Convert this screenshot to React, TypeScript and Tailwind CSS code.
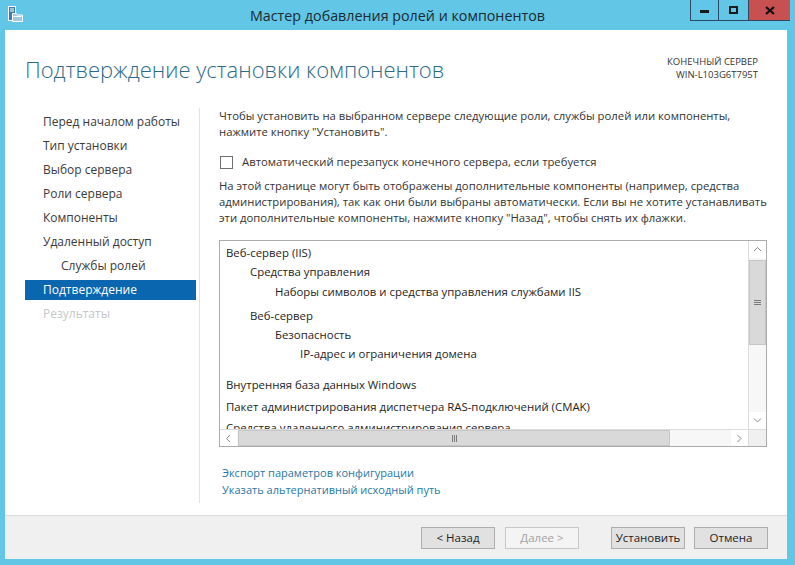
import React from 'react'

const font = { fontFamily: '"Open Sans", "Noto Sans", sans-serif' }

const navItems = [
  { label: 'Перед началом работы', indent: false, state: 'normal' },
  { label: 'Тип установки', indent: false, state: 'normal' },
  { label: 'Выбор сервера', indent: false, state: 'normal' },
  { label: 'Роли сервера', indent: false, state: 'normal' },
  { label: 'Компоненты', indent: false, state: 'normal' },
  { label: 'Удаленный доступ', indent: false, state: 'normal' },
  { label: 'Службы ролей', indent: true, state: 'normal' },
  { label: 'Подтверждение', indent: false, state: 'active' },
  { label: 'Результаты', indent: false, state: 'disabled' },
]

// tree of features to install; mt tweaks spacing between groups
const features = [
  { label: 'Веб-сервер (IIS)', level: 0, mt: 'mt-[2px]' },
  { label: 'Средства управления', level: 1, mt: 'mt-0' },
  { label: 'Наборы символов и средства управления службами IIS', level: 2, mt: 'mt-[1px]' },
  { label: 'Веб-сервер', level: 1, mt: 'mt-[5px]' },
  { label: 'Безопасность', level: 2, mt: 'mt-0' },
  { label: 'IP-адрес и ограничения домена', level: 3, mt: 'mt-0' },
  { label: 'Внутренняя база данных Windows', level: 0, mt: 'mt-[12px]' },
  { label: 'Пакет администрирования диспетчера RAS-подключений (CMAK)', level: 0, mt: 'mt-[3px]' },
  { label: 'Средства удаленного администрирования сервера', level: 0, mt: 'mt-[2px]' },
]

const indents = ['pl-[6px]', 'pl-[30px]', 'pl-[55px]', 'pl-[80px]']

function WindowIcon() {
  return (
    <svg width="17" height="16" viewBox="0 0 17 16" className="ml-[7px] mt-[6px]">
      <rect x="1.5" y="0.5" width="7" height="14" fill="#3a7bbf" stroke="#ffffff" />
      <rect x="3" y="2.5" width="4" height="1" fill="#ffffff" />
      <rect x="3" y="4.5" width="4" height="1" fill="#ffffff" />
      <path d="M5.5 7.5 h4 l1 1.5 h5 v6.5 h-10 z" fill="#9fc9e0" stroke="#ffffff" />
      <path d="M6.5 10.5 h8" stroke="#ffffff" />
    </svg>
  )
}

function TitleBar() {
  return (
    <div className="relative h-[30px] flex items-start shrink-0">
      <WindowIcon />
      <div className="absolute left-0 right-0 top-[5px] text-center text-[14.3px] text-[#1b2a33]" style={font}>
        Мастер добавления ролей и компонентов
      </div>
      <div className="ml-auto mr-[5px] flex h-[21px] border-b border-l border-[#2c4a63]">
        <div className="w-[28px] flex items-center justify-center border-r border-[#2c4a63]">
          <div className="w-[9px] h-[3px] bg-[#1a1a1a] mt-[3px]" />
        </div>
        <div className="w-[29px] flex items-center justify-center">
          <div className="w-[9px] h-[8px] border-2 border-[#1a1a1a]" />
        </div>
        <div className="w-[42px] flex items-center justify-center bg-[#c75050] border-l border-[#2c4a63]">
          <svg width="10" height="9" viewBox="0 0 10 9">
            <path d="M1 1 L9 8 M9 1 L1 8" stroke="#111" strokeWidth="2.2" />
          </svg>
        </div>
      </div>
    </div>
  )
}

function ScrollArrow({ dir }: { dir: 'up' | 'down' | 'left' | 'right' }) {
  const paths = {
    up: 'M1 5 L4.5 1.5 L8 5',
    down: 'M1 1.5 L4.5 5 L8 1.5',
    left: 'M5 1 L1.5 4.5 L5 8',
    right: 'M1.5 1 L5 4.5 L1.5 8',
  }
  const horiz = dir === 'left' || dir === 'right'
  return (
    <div className={`flex items-center justify-center shrink-0 bg-white ${horiz ? 'w-[17px] h-full' : 'h-[17px] w-full'}`}>
      <svg width={horiz ? 7 : 9} height={horiz ? 9 : 7} viewBox={horiz ? '0 0 7 9' : '0 0 9 7'}>
        <path d={paths[dir]} fill="none" stroke="#8a8a8a" strokeWidth="1" />
      </svg>
    </div>
  )
}

function FeatureList() {
  return (
    <div className="mt-[14px] w-[548px] h-[207px] border border-[#ababab] flex flex-col bg-white">
      <div className="flex flex-1 min-h-0">
        <div className="flex-1 overflow-hidden text-[11.4px] text-[#1e1e1e]">
          {features.map((f) => (
            <div key={f.label} className={`h-[19px] leading-[19px] whitespace-nowrap ${indents[f.level]} ${f.mt}`}>
              {f.label}
            </div>
          ))}
        </div>
        {/* vertical scrollbar */}
        <div className="w-[18px] flex flex-col border-l border-[#dcdcdc] bg-[#f7f7f7]">
          <ScrollArrow dir="up" />
          <div className="mt-[2px] h-[85px] bg-[#d9d9d9] border border-[#c6c6c6] flex items-center justify-center">
            <div className="flex flex-col gap-[1px]">
              <div className="w-[7px] h-[1px] bg-[#7a7a7a]" />
              <div className="w-[7px] h-[1px] bg-[#7a7a7a]" />
              <div className="w-[7px] h-[1px] bg-[#7a7a7a]" />
            </div>
          </div>
          <div className="flex-1" />
          <ScrollArrow dir="down" />
        </div>
      </div>
      {/* horizontal scrollbar */}
      <div className="h-[17px] flex shrink-0 border-t border-[#dcdcdc]">
        <div className="flex-1 flex bg-[#f7f7f7]">
          <ScrollArrow dir="left" />
          <div className="ml-[1px] w-[432px] bg-[#d9d9d9] border border-[#c6c6c6] flex items-center justify-center">
            <div className="flex gap-[1px]">
              <div className="w-[1px] h-[7px] bg-[#7a7a7a]" />
              <div className="w-[1px] h-[7px] bg-[#7a7a7a]" />
              <div className="w-[1px] h-[7px] bg-[#7a7a7a]" />
            </div>
          </div>
          <div className="flex-1" />
          <ScrollArrow dir="right" />
        </div>
        <div className="w-[18px] border-l border-[#dcdcdc] bg-[#f0f0f0]" />
      </div>
    </div>
  )
}

function Button({ children, disabled }: { children: React.ReactNode; disabled?: boolean }) {
  return (
    <div
      className={`w-[74px] h-[22px] flex items-center justify-center text-[11.5px] border ${
        disabled ? 'bg-[#f4f4f4] border-[#c8c8c8] text-[#a2a2a2]' : 'bg-[#e1e1e1] border-[#adadad] text-[#1e1e1e]'
      }`}
    >
      {children}
    </div>
  )
}

export default function App() {
  return (
    <div className="w-[795px] h-[565px] bg-[#62c6e6] flex flex-col overflow-hidden" style={font}>
      <TitleBar />
      <div className="ml-[5px] mr-[8px] mb-[6px] flex-1 bg-white flex flex-col min-h-0">
        {/* header */}
        <div className="h-[78px] flex items-start shrink-0">
          <h1 className="pl-[20px] pt-[25px] text-[22px] leading-[28px] font-light text-[#2e6a88]">
            Подтверждение установки компонентов
          </h1>
          <div className="ml-auto pr-[29px] pt-[25px] text-right text-[9.5px] leading-[13px] text-[#333]">
            <div>КОНЕЧНЫЙ СЕРВЕР</div>
            <div>WIN-L103G6T795T</div>
          </div>
        </div>

        <div className="flex flex-1 min-h-0">
          {/* wizard steps */}
          <div className="w-[195px] shrink-0 pt-[2px] pl-[20px] pr-[3px] border-r border-[#e3e3e3] mb-[12px]">
            {navItems.map((item) => (
              <div key={item.label} className="py-[2px]">
                <div
                  className={`h-[20px] leading-[20px] text-[12px] whitespace-nowrap ${item.indent ? 'pl-[36px]' : 'pl-[18px]'} ${
                    item.state === 'active'
                      ? 'bg-[#0b66b0] text-white'
                      : item.state === 'disabled'
                        ? 'text-[#c6c6c6]'
                        : 'text-[#3a3a3a]'
                  }`}
                >
                  {item.label}
                </div>
              </div>
            ))}
          </div>

          {/* main content */}
          <div className="flex-1 pl-[19px] text-[11.3px] leading-[16px] text-[#333]">
            <p className="whitespace-nowrap">
              Чтобы установить на выбранном сервере следующие роли, службы ролей или компоненты,
              <br />
              нажмите кнопку "Установить".
            </p>
            <label className="mt-[14px] flex items-center h-[16px]">
              <span className="ml-[1px] w-[13px] h-[13px] border border-[#707070] bg-white" />
              <span className="ml-[9px]">Автоматический перезапуск конечного сервера, если требуется</span>
            </label>
            <p className="mt-[8px] whitespace-nowrap">
              На этой странице могут быть отображены дополнительные компоненты (например, средства
              <br />
              администрирования), так как они были выбраны автоматически. Если вы не хотите устанавливать
              <br />
              эти дополнительные компоненты, нажмите кнопку "Назад", чтобы снять их флажки.
            </p>
            <FeatureList />
            <div className="mt-[17px] ml-[3px] text-[11px] text-[#1f78a8] leading-[17px]">
              <div>Экспорт параметров конфигурации</div>
              <div>Указать альтернативный исходный путь</div>
            </div>
          </div>
        </div>

        {/* footer */}
        <div className="h-[44px] shrink-0 bg-[#f0f0f0] border-t border-[#dcdcdc] flex items-center justify-end pr-[19px]">
          <Button>&lt; Назад</Button>
          <div className="w-[10px]" />
          <Button disabled>Далее &gt;</Button>
          <div className="w-[32px]" />
          <Button>Установить</Button>
          <div className="w-[9px]" />
          <Button>Отмена</Button>
        </div>
      </div>
    </div>
  )
}
